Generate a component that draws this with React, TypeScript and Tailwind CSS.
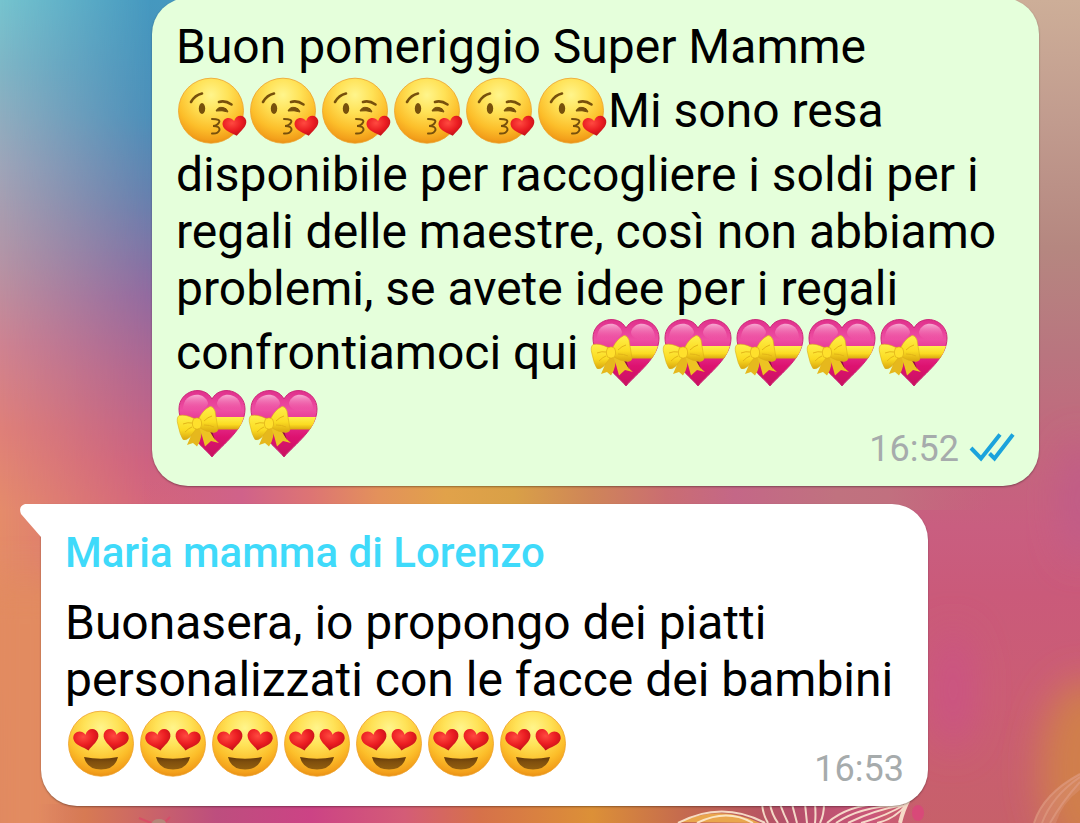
import type { ReactNode } from "react";

const HEART = "M0 10 C-4 6 -12 3 -12 -3.5 C-11.5 -10 -3 -11.5 0 -5 C3 -11.5 11.5 -10 12 -3.5 C12 3 4 6 0 10Z";

function Defs() {
  return (
    <svg className="absolute size-0" aria-hidden="true">
      <defs>
        <radialGradient id="face" cx="0.5" cy="0.26" r="0.76">
          <stop offset="0" stopColor="#fff58c" />
          <stop offset="0.35" stopColor="#ffe257" />
          <stop offset="0.7" stopColor="#fcbe2a" />
          <stop offset="0.9" stopColor="#f3a01b" />
          <stop offset="1" stopColor="#e58a12" />
        </radialGradient>
        <radialGradient id="red" cx="0.4" cy="0.3" r="0.75">
          <stop offset="0" stopColor="#ff4a40" />
          <stop offset="0.55" stopColor="#ea1c21" />
          <stop offset="1" stopColor="#b80f17" />
        </radialGradient>
        <linearGradient id="pink" x1="0" y1="0" x2="0" y2="1">
          <stop offset="0" stopColor="#e0308c" />
          <stop offset="0.3" stopColor="#ee4ea3" />
          <stop offset="0.5" stopColor="#e52f8b" />
          <stop offset="0.7" stopColor="#dd1270" />
          <stop offset="1" stopColor="#c8115f" />
        </linearGradient>
        <linearGradient id="shine" x1="0" y1="0" x2="0" y2="1">
          <stop offset="0" stopColor="#f9b5d8" stopOpacity="0.9" />
          <stop offset="1" stopColor="#f567ae" stopOpacity="0" />
        </linearGradient>
        <linearGradient id="ribbon" x1="0" y1="0" x2="0" y2="1">
          <stop offset="0" stopColor="#fff04a" />
          <stop offset="0.6" stopColor="#fbdb22" />
          <stop offset="1" stopColor="#d9a60f" />
        </linearGradient>
        <linearGradient id="mouth" x1="0" y1="0" x2="0" y2="1">
          <stop offset="0" stopColor="#63390a" />
          <stop offset="0.4" stopColor="#7f4f0d" />
          <stop offset="1" stopColor="#925f10" />
        </linearGradient>
      </defs>
    </svg>
  );
}

function Emoji({ label, children }: { label: string; children: ReactNode }) {
  return (
    <svg role="img" aria-label={label} viewBox="0 0 72 71" className="inline-block h-[71px] w-[72px] align-[-19px]">
      {children}
    </svg>
  );
}

function Kiss() {
  return (
    <Emoji label="😘">
      <circle cx="35" cy="35.7" r="32.5" fill="url(#face)" stroke="#eda12a" strokeWidth="0.8" />
      <g fill="none" stroke="#77500c" strokeLinecap="round">
        <path d="M15 27 Q19 20 26 18.5" strokeWidth="2.6" />
        <path d="M43 27 Q49 25 55.5 29.5" strokeWidth="2.6" />
        <path d="M36 44 Q45 44 43 47.5 Q41 51 37 51 Q44 51 43.5 55 Q42 59 36 58.5" strokeWidth="2" />
      </g>
      <path d="M40 36 Q42 31.5 47 32.5 Q51 33 52 37 Q46 35 40 36Z" fill="#77500c" stroke="#77500c" strokeLinejoin="round" />
      <ellipse cx="26" cy="33.5" rx="3.2" ry="5.4" fill="#77500c" />
      <path d={HEART} transform="translate(59 51) rotate(-10)" fill="url(#red)" />
    </Emoji>
  );
}

function HeartEyes() {
  return (
    <Emoji label="😍">
      <circle cx="36" cy="35.7" r="32.5" fill="url(#face)" stroke="#eda12a" strokeWidth="0.8" />
      <path d={HEART} transform="translate(21.5 32) rotate(-11) scale(1.06)" fill="url(#red)" />
      <path d={HEART} transform="translate(50.5 32) rotate(11) scale(1.06)" fill="url(#red)" />
      <path d="M19 49 Q36 52.5 53 49 Q50 61.5 36 61.5 Q22 61.5 19 49Z" fill="url(#mouth)" />
    </Emoji>
  );
}

function RibbonHeart() {
  return (
    <Emoji label="💝">
      <path
        d="M36 69 C25 56 3 41 3 21 C3 2 28 -4 36 11 C44 -4 69 2 69 21 C69 41 47 56 36 69Z"
        fill="url(#pink)"
        stroke="#cc2878"
      />
      <path d="M7 21 C7 5 28 2 32 15 C32 22 16 26 7 21Z" fill="url(#shine)" />
      <path d="M41 15 C45 2 65 5 65 21 C57 26 41 23 41 15Z" fill="url(#shine)" />
      <path d="M38 29 H68 Q66 36 62 41.5 H38Z" fill="url(#ribbon)" />
      <path d="M17 40 Q15 49 11 57 L17 55 L21 58.5 Q27 50 25 39Z" fill="#e6b81d" />
      <path d="M23 39 Q27 50 29 58.5 L35 53 L43 55 Q35 49 33 38Z" fill="#edc322" />
      <path d="M33 42 L39 52 L36 43Z" fill="#8d123f" />
      <path
        d="M19 31 Q10 26 3 27.5 Q0 30 2 37 Q4 47 7 51.5 Q10 53 14 49 L20 41Z"
        fill="url(#ribbon)"
        stroke="#dcae17"
        strokeWidth="0.6"
      />
      <path
        d="M23 30 Q27 22 34 18.5 Q37 18 39 23 L42 41 Q42 44 38 44.5 Q30 44 24 40Z"
        fill="url(#ribbon)"
        stroke="#dcae17"
        strokeWidth="0.6"
      />
      <path d="M7 36 Q12 34 16 35 M9 44 Q13 40 16 39 M28 33 Q32 29 36 28 M28 37 Q34 37 38 39" fill="none" stroke="#e3b518" strokeWidth="1" />
      <rect x="16.5" y="30" width="9" height="11" rx="4" fill="#ffe02c" stroke="#dcae17" strokeWidth="0.7" />
    </Emoji>
  );
}

function Wallpaper() {
  return (
    <svg
      viewBox="0 0 1080 823"
      preserveAspectRatio="none"
      className="absolute inset-0 -z-10 h-full w-full"
      aria-hidden="true"
    >
      <defs>
        <filter id="softer" x="-100%" y="-100%" width="300%" height="300%">
          <feGaussianBlur stdDeviation="18" />
        </filter>
        <linearGradient id="left" x1="0" y1="0" x2="0" y2="1">
          <stop offset="0" stopColor="#76c4cf" />
          <stop offset="0.08" stopColor="#7fb6c6" />
          <stop offset="0.2" stopColor="#9ea5b9" />
          <stop offset="0.32" stopColor="#b594a5" />
          <stop offset="0.42" stopColor="#cf8391" />
          <stop offset="0.52" stopColor="#df8079" />
          <stop offset="0.62" stopColor="#e58c6b" />
          <stop offset="0.8" stopColor="#e28c60" />
          <stop offset="1" stopColor="#d77c63" />
        </linearGradient>
        <linearGradient id="inner" x1="0" y1="0" x2="0" y2="1">
          <stop offset="0" stopColor="#4598bf" />
          <stop offset="0.14" stopColor="#4c8fb9" />
          <stop offset="0.24" stopColor="#6680ae" />
          <stop offset="0.36" stopColor="#926a9f" />
          <stop offset="0.45" stopColor="#b06590" />
          <stop offset="0.56" stopColor="#cd6181" />
          <stop offset="0.62" stopColor="#d5667c" />
          <stop offset="1" stopColor="#d57a53" />
        </linearGradient>
        <linearGradient id="fade">
          <stop offset="0" stopColor="white" stopOpacity="0" />
          <stop offset="1" stopColor="white" />
        </linearGradient>
        <mask id="across">
          <rect width="150" height="823" fill="url(#fade)" />
          <rect x="150" width="930" height="823" fill="white" />
        </mask>
        <linearGradient id="right" x1="0" y1="0" x2="0" y2="1">
          <stop offset="0" stopColor="#cdae98" />
          <stop offset="0.15" stopColor="#c19b8e" />
          <stop offset="0.3" stopColor="#b58780" />
          <stop offset="0.43" stopColor="#b9757f" />
          <stop offset="0.55" stopColor="#c3667d" />
          <stop offset="0.64" stopColor="#c95e80" />
          <stop offset="0.72" stopColor="#ca5a7a" />
          <stop offset="0.85" stopColor="#cb5d74" />
          <stop offset="1" stopColor="#c7606a" />
        </linearGradient>
        <linearGradient id="middle">
          <stop offset="0" stopColor="#cd6181" stopOpacity="0" />
          <stop offset="0.12" stopColor="#d0628a" />
          <stop offset="0.2" stopColor="#dd7474" />
          <stop offset="0.28" stopColor="#e3915b" />
          <stop offset="0.36" stopColor="#e1a24a" />
          <stop offset="0.44" stopColor="#d9a047" />
          <stop offset="0.53" stopColor="#cf8558" />
          <stop offset="0.62" stopColor="#ca6d72" />
          <stop offset="0.7" stopColor="#c46787" />
          <stop offset="0.82" stopColor="#c0727f" />
          <stop offset="0.88" stopColor="#c1707f" />
          <stop offset="1" stopColor="#c36a7d" stopOpacity="0" />
        </linearGradient>
        <linearGradient id="bottom">
          <stop offset="0.04" stopColor="#d87c62" stopOpacity="0" />
          <stop offset="0.09" stopColor="#d77a53" />
          <stop offset="0.23" stopColor="#bd4e7e" />
          <stop offset="0.33" stopColor="#cc4385" />
          <stop offset="0.43" stopColor="#d45c77" />
          <stop offset="0.51" stopColor="#d6714a" />
          <stop offset="0.63" stopColor="#dc9037" />
          <stop offset="0.73" stopColor="#c4694f" />
          <stop offset="0.84" stopColor="#b44f6a" />
          <stop offset="0.93" stopColor="#ca5679" />
          <stop offset="1" stopColor="#c7606a" stopOpacity="0" />
        </linearGradient>
      </defs>
      <rect width="1080" height="823" fill="url(#left)" />
      <rect width="1080" height="823" fill="url(#inner)" mask="url(#across)" />
      <rect x="-20" y="580" width="90" height="300" fill="#e28b60" filter="url(#softer)" />
      <rect x="890" width="190" height="823" fill="url(#right)" />
      <rect x="140" y="482" width="850" height="28" fill="url(#middle)" />
      <rect x="0" y="804" width="940" height="19" fill="url(#bottom)" />
      <ellipse cx="1085" cy="770" rx="45" ry="90" fill="#d07f4b" filter="url(#softer)" />
      <ellipse cx="953" cy="690" rx="20" ry="60" fill="#cb5284" filter="url(#softer)" />
      <ellipse cx="1080" cy="500" rx="18" ry="60" fill="#c05c89" filter="url(#softer)" />
      <path d="M680 822 Q720 804 760 823Z" fill="#e9a64d" />
      <g fill="none" stroke="#fff0d8" strokeWidth="2" opacity="0.85">
        <path d="M678 823 Q722 800 765 823 M697 823 Q727 808 753 823" />
        <path d="M762 804 Q763 815 768 823 M770 804 Q772 815 778 823 M780 804 Q784 815 788 823" />
        <path d="M792 804 L797 823 M805 804 L807 823 M815 804 Q816 815 815 823 M824 804 Q824 815 820 823" />
        <path d="M827 823 Q848 805 880 804 M836 823 Q859 807 899 805 M848 823 Q874 810 903 805 M861 823 Q886 816 906 804 M877 823 Q895 819 907 804" />
        <path d="M900 823 Q903 810 909 799" strokeWidth="4" />
      </g>
      <ellipse cx="918" cy="813" rx="6" ry="8" fill="#dc437c" opacity="0.8" />
      <path d="M1034 823 Q1043 794 1080 774 V790 Q1062 803 1056 823Z" fill="#dd957b" opacity="0.4" />
      <g fill="none" stroke="#df9b83" strokeWidth="2" opacity="0.65">
        <path d="M1034 823 Q1043 794 1080 774 M1042 823 Q1052 796 1080 777 M1050 823 Q1062 802 1080 782" />
      </g>
      <g fill="none" stroke="#dd4566" strokeWidth="2" opacity="0.7">
        <path d="M139 818 L151 823 M170 817 L164 823" />
      </g>
      <ellipse cx="159" cy="823" rx="7" ry="4" fill="#b48779" />
    </svg>
  );
}

function Ticks() {
  return (
    <svg viewBox="0 0 46 32" className="h-8 w-[46px]" role="img" aria-label="Read">
      <path
        d="M2 15 L12 25.5 L31 1.5 M20.5 20.5 L25.5 25.5 L44 1.5"
        fill="none"
        stroke="#1ba3dc"
        strokeWidth="4"
        strokeLinejoin="miter"
      />
    </svg>
  );
}

function Meta({ time, read }: { time: string; read?: boolean }) {
  return (
    <footer className="col-start-1 row-start-1 flex items-center gap-2.5 self-end justify-self-end text-4xl leading-10 text-[#a6abac]">
      <time>{time}</time>
      {read && <Ticks />}
    </footer>
  );
}

function repeat(count: number, Icon: () => ReactNode) {
  return Array.from({ length: count }, (_, i) => <Icon key={i} />);
}

export default function App() {
  return (
    <main className="relative isolate flex min-h-screen flex-col gap-[18px] overflow-hidden px-[41px] pb-[17px] font-['Roboto',sans-serif] text-5xl leading-[57px] text-black">
      <Defs />
      <Wallpaper />
      <article className="-mt-0.5 grid w-full max-w-[887px] self-end rounded-[36px] bg-[#e5ffdb] px-6 pt-5 pb-[17px] shadow-[0_1px_2px_rgba(0,0,0,0.35)]">
        <p className="col-start-1 row-start-1 pb-2.5">
          Buon pomeriggio Super Mamme
          <br />
          {repeat(6, Kiss)}Mi sono resa disponibile per raccogliere i soldi per i regali delle maestre, così non abbiamo
          problemi, se avete idee per i regali confrontiamoci qui {repeat(7, RibbonHeart)}
        </p>
        <Meta time="16:52" read />
      </article>
      <article className="relative w-full max-w-[887px] rounded-[36px] rounded-tl-none bg-white px-6 pt-[25px] pb-[17px] shadow-[0_1px_2px_rgba(0,0,0,0.35)]">
        <svg viewBox="0 0 22 34" className="absolute top-0 -left-[21px] h-[34px] w-[22px]" aria-hidden="true">
          <path d="M22 0 H5 Q-2 2 1 10 L21 33 H22Z" fill="white" />
        </svg>
        <h2 className="mb-[17px] text-[42px] leading-[48px] font-medium text-[#3fdafa]">Maria mamma di Lorenzo</h2>
        <div className="grid">
          <p className="col-start-1 row-start-1 pb-2.5">
            Buonasera, io propongo dei piatti personalizzati con le facce dei bambini {repeat(7, HeartEyes)}
          </p>
          <Meta time="16:53" />
        </div>
      </article>
    </main>
  );
}
